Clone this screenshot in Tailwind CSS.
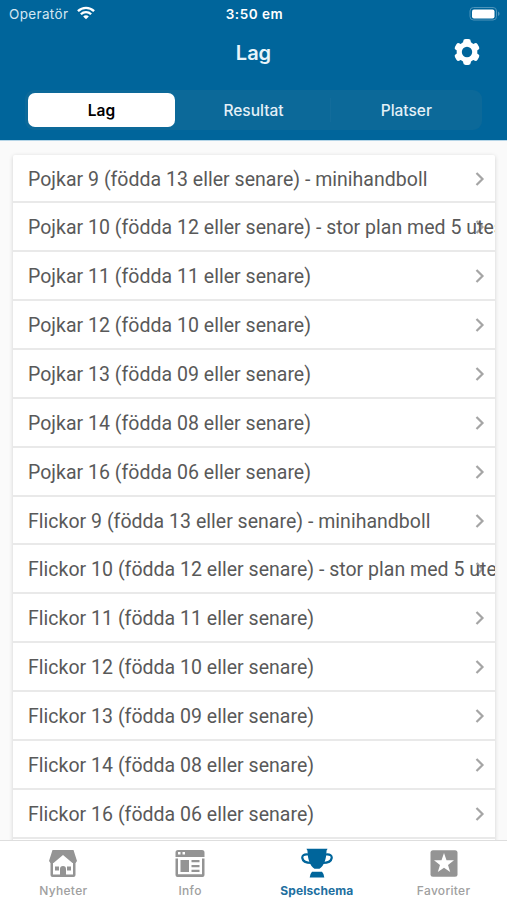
<!DOCTYPE html>
<html lang="sv">
<head>
<meta charset="utf-8">
<title>Lag</title>
<script src="https://cdn.jsdelivr.net/npm/@tailwindcss/browser@4"></script>
</head>
<body class="bg-[#fafafa]">
<div class="flex h-[900px] w-[507px] flex-col overflow-hidden font-['Inter',sans-serif]">
  <header class="h-[140px] shrink-0 bg-[#00659b] text-white">
    <div class="grid h-7 grid-cols-3 items-center pl-[9px] pr-[7px] text-[13.5px]">
      <div class="flex items-center gap-[6px] text-[#d3e7f2]"><span class="w-[62px] whitespace-nowrap tracking-[0.35px]">Operatör</span>
        <svg class="-mt-0.5" width="18" height="14" viewBox="0 0 19 14" fill="none" stroke="#fff" stroke-width="2.5"><path d="M1 5.1C5.8.4 13.2.4 18 5.1M4.1 8.3c3-3 7.800-3 10.800 0"/><path d="M9.500 13.500 6.500 10.600c1.700-1.500 4.300-1.500 6 0z" fill="#fff" stroke="none"/></svg>
      </div>
      <div class="text-center font-semibold tracking-[0.55px]">3:50 em</div>
      <svg class="justify-self-end" width="31" height="14" viewBox="0 0 31 14"><rect x="1" y=".5" width="26.5" height="12.5" rx="3.5" fill="none" stroke="#4d94ba"/><rect x="3" y="2.5" width="22.5" height="9" rx="2" fill="#fff"/><path d="M29 4.500c2 .8 2 3.700 0 4.500z" fill="#4d94ba"/></svg>
    </div>
    <div class="grid h-[48px] grid-cols-3 items-center px-[26px]">
      <h1 class="col-start-2 pt-px text-center text-[20px] font-semibold text-[#e8f4fa]">Lag</h1>
      <svg class="justify-self-end" width="28" height="28" viewBox="0 0 28 28"><g fill="#fff"><circle cx="14" cy="14" r="10.4"/><g id="t"><rect x="10.2" y="1" width="7.6" height="26" rx="2.4"/></g><use href="#t" transform="rotate(60 14 14)"/><use href="#t" transform="rotate(120 14 14)"/></g><circle cx="14" cy="14" r="5.2" fill="#00659b"/></svg>
    </div>
    <div class="mx-[25px] mt-[14px] grid h-[40px] grid-cols-3 items-center rounded-[9px] bg-[#0c6999] text-center text-[15.5px] font-medium text-[#e4f0f7]">
      <div class="ml-[3px] mr-[3px] flex h-[34px] w-[147px] items-center justify-center rounded-[7px] bg-white pt-px font-semibold text-black">Lag</div>
      <div class="pt-px">Resultat</div>
      <div class="border-l border-[#126c9b] pt-px">Platser</div>
    </div>
  </header>
  <main class="min-h-0 flex-1 overflow-hidden border-t border-[#b5d5e7] px-[13px] pt-[13.5px]">
    <ul id="teams" class="w-[482px] overflow-hidden rounded-t-[2px] bg-white font-['Roboto',sans-serif] text-[19.5px] text-[#595959] shadow-[0_1px_4px_rgba(0,0,0,0.17)]"></ul>
  </main>
  <nav class="grid h-[60px] shrink-0 grid-cols-4 border-t border-[#dedede] bg-white text-center text-[12px] font-medium text-[#a0a0a0]">
    <div class="flex flex-col items-center gap-[3px] pt-[7px]">
      <svg width="32" height="32" viewBox="0 0 32 32" fill="#949494"><path d="M5.500 2h21l3.500 11-1.500 2h-3L16 7 6.500 15h-3L2 13z"/><path d="M3.500 14h2.500v12.500h20V14h2.500v13q0 2-2 2h-21q-2 0-2-2z"/><path d="M8 18.500h4v4H8zM20 18.500h4v4h-4zM13 21a3 3 0 0 1 6 0v7h-6z"/></svg>
      <span class="leading-4 tracking-[0.3px]">Nyheter</span>
    </div>
    <div class="flex flex-col items-center gap-[3px] pt-[7px]">
      <svg width="32" height="32" viewBox="0 0 32 32" fill="#949494"><path fill-rule="evenodd" d="M4 2h24q2.500 0 2.500 2.500V9h-29V4.500Q1.500 2 4 2zM4 4v2.500h2.500V4zM8.500 4v2.500H11V4z"/><path fill-rule="evenodd" d="M1.500 10.500h29V27q0 2-2 2h-25q-2 0-2-2zM4 10.500v15.700h24V10.500z"/><path d="M6.500 12H15v12H6.500zM17.500 12h8v2.300h-8zM17.500 17h8v2.300h-8zM17.500 21.700h8V24h-8z"/></svg>
      <span class="leading-4 tracking-[0.3px]">Info</span>
    </div>
    <div class="flex flex-col items-center gap-[3px] pt-[7px] font-bold text-[#216f9f]">
      <svg width="32" height="32" viewBox="0 0 32 32" fill="#00659b"><path d="M5.500.7h21c-.3 1-1 1.300-1 2.500-.2 8-2.500 14.500-7 17.500h-5c-4.500-3-6.800-9.500-7-17.500 0-1.200-.7-1.500-1-2.500zM11 23.800h10q2 2 2.300 5.700H8.700Q9 25.800 11 23.800z"/><path d="M7 6.500C3 6 1 7.500 1.300 10c.4 3 4 5 9.200 5M25 6.500c4-.5 6 1 5.700 3.500-.4 3-4 5-9.200 5" fill="none" stroke="#00659b" stroke-width="2.200"/></svg>
      <span class="leading-4 tracking-[0.1px]">Spelschema</span>
    </div>
    <div class="flex flex-col items-center gap-[3px] pt-[7px]">
      <svg width="32" height="32" viewBox="0 0 32 32"><rect x="2.500" y="2.300" width="27" height="26.500" rx="2.500" fill="#949494"/><path d="m16 5 2.500 7.200 7.500.1-6 4.600 2.200 7.200-6.200-4.300-6.200 4.300 2.200-7.200-6-4.600 7.500-.1z" fill="#fff"/></svg>
      <span class="leading-4 tracking-[0.3px]">Favoriter</span>
    </div>
  </nav>
</div>
<script>
const teams = [
  "Pojkar 9 (födda 13 eller senare) - minihandboll",
  "Pojkar 10 (födda 12 eller senare) - stor plan med 5 utespelare",
  "Pojkar 11 (födda 11 eller senare)",
  "Pojkar 12 (födda 10 eller senare)",
  "Pojkar 13 (födda 09 eller senare)",
  "Pojkar 14 (födda 08 eller senare)",
  "Pojkar 16 (födda 06 eller senare)",
  "Flickor 9 (födda 13 eller senare) - minihandboll",
  "Flickor 10 (födda 12 eller senare) - stor plan med 5 utespelare",
  "Flickor 11 (födda 11 eller senare)",
  "Flickor 12 (födda 10 eller senare)",
  "Flickor 13 (födda 09 eller senare)",
  "Flickor 14 (födda 08 eller senare)",
  "Flickor 16 (födda 06 eller senare)",
  ""
];
document.getElementById("teams").innerHTML = teams.map(name => `
  <li class="relative flex h-[48.87px] items-center overflow-hidden border-b-2 border-[#e9e9e9] pl-[15px] pt-[2.5px] whitespace-nowrap">
    <svg class="absolute right-[9px] top-[16px]" width="12" height="16" viewBox="0 0 12 16" fill="none" stroke="#a5a5a5" stroke-width="2.2"><path d="m2.500 2 6 6-6 6"/></svg>
    <span class="relative tracking-[0.02px]">${name}</span>
  </li>`).join("");
</script>
</body>
</html>
